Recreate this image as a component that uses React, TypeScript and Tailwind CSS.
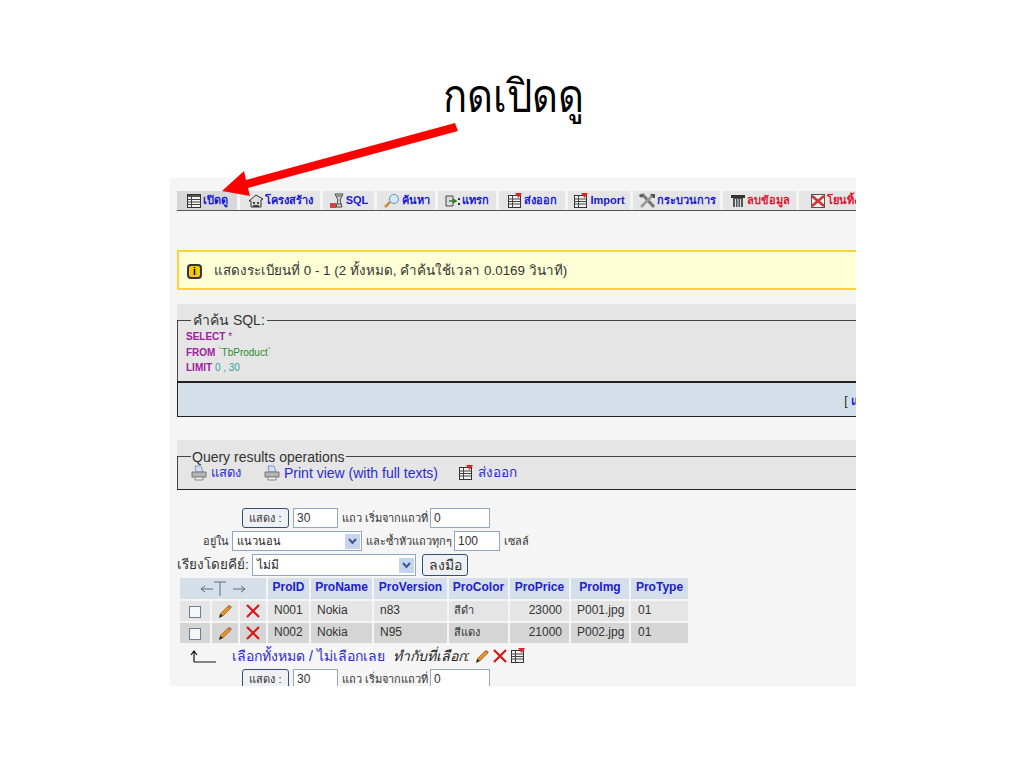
import React from "react";

const F = "font-['Liberation_Sans','Noto_Sans','DejaVu_Sans',sans-serif]";

function TableIcon() {
  return (
    <svg width="16" height="16" viewBox="0 0 16 16" className="shrink-0">
      <rect x="1.5" y="1.5" width="13" height="13" fill="#f2f2f2" stroke="#333" />
      <path d="M2 2h12v2H2z" fill="#555" />
      <path d="M1.500 6.500h13M1.500 9h13M1.500 11.500h13M5.500 2v12" stroke="#444" />
    </svg>
  );
}
function ExportIcon() {
  return (
    <svg width="16" height="16" viewBox="0 0 16 16" className="shrink-0">
      <rect x="1.5" y="2.5" width="12" height="12" fill="#f2f2f2" stroke="#333" />
      <path d="M1.500 6h12M1.500 8.500h12M1.500 11h12M5.500 2.500v12" stroke="#444" />
      <path d="M8 0h7l-3.500 5z" fill="#d22" />
    </svg>
  );
}
function HouseIcon() {
  return (
    <svg width="16" height="16" viewBox="0 0 16 16" className="shrink-0">
      <path d="M1 8l7-6 7 4-2 1v7H3V8z" fill="#ddd" stroke="#333" />
      <path d="M5 9h2v2H5zM9 9h2v2H9zM5 12h6v2H5z" fill="#444" />
    </svg>
  );
}
function SqlIcon() {
  return (
    <svg width="16" height="16" viewBox="0 0 16 16" className="shrink-0">
      <path d="M6 1h8l-3 6 2 7H7l2-7z" fill="#ddd" stroke="#444" />
      <path d="M7.500 3h5M8 11h4" stroke="#444" />
      <path d="M1 10h6v5H1z" fill="#c44" />
    </svg>
  );
}
function SearchIcon() {
  return (
    <svg width="18" height="16" viewBox="0 0 18 16" className="shrink-0">
      <path d="M7 9l-5 5" stroke="#c98a3a" strokeWidth="2.5" />
      <circle cx="11" cy="6" r="4.5" fill="#d8e8fb" stroke="#6a8fc0" />
    </svg>
  );
}
function InsertIcon() {
  return (
    <svg width="16" height="16" viewBox="0 0 16 16" className="shrink-0">
      <path d="M1 3h7v10H1z" fill="#ddd" stroke="#444" />
      <path d="M4 8h6M8 6l3 2-3 2" stroke="#2a7a2a" strokeWidth="1.5" fill="none" />
      <path d="M13 5h2v2h-2zM13 10h2v2h-2z" fill="#333" />
    </svg>
  );
}
function ToolsIcon() {
  return (
    <svg width="18" height="16" viewBox="0 0 18 16" className="shrink-0">
      <path d="M4 1L16 14" stroke="#777" strokeWidth="3" />
      <path d="M15 2L3 14" stroke="#999" strokeWidth="2.500" />
      <path d="M12 1h5v4h-2zM2 1l3 1-1 3-3-2z" fill="#555" />
    </svg>
  );
}
function TrashIcon() {
  return (
    <svg width="16" height="16" viewBox="0 0 16 16" className="shrink-0">
      <path d="M1 2h14v3H1z" fill="#333" />
      <path d="M3 5h10v9H3z" fill="#555" />
      <path d="M5.500 6v8M8 6v8M10.500 6v8" stroke="#ddd" />
    </svg>
  );
}
function DropIcon() {
  return (
    <svg width="16" height="16" viewBox="0 0 16 16" className="shrink-0">
      <rect x="1.500" y="1.500" width="13" height="13" fill="#eee" stroke="#555" />
      <path d="M2 3l12 10M14 3L2 13" stroke="#c33" strokeWidth="2.500" />
    </svg>
  );
}
function PrintIcon() {
  return (
    <svg width="16" height="16" viewBox="0 0 16 16" className="shrink-0">
      <path d="M4 1h6l2 6H5z" fill="#cfe0f5" stroke="#7d9cc4" />
      <path d="M1 7h14v5H1z" fill="#b5b5b5" stroke="#777" />
      <path d="M4 12h8v3H4z" fill="#eee" stroke="#888" />
    </svg>
  );
}
function PencilIcon() {
  return (
    <svg width="16" height="16" viewBox="0 0 16 16" className="shrink-0">
      <path d="M3 11l8-8 3 2-8 8z" fill="#e0902c" stroke="#8a5a1c" strokeWidth=".6" />
      <path d="M11 3l1-1 3 2-1 1z" fill="#c9584a" />
      <path d="M3 11l3 2-4 2z" fill="#222" />
    </svg>
  );
}
function CrossIcon() {
  return (
    <svg width="14" height="14" viewBox="0 0 14 14" className="shrink-0">
      <path d="M1 1l12 12M13 1L1 13" stroke="#d81818" strokeWidth="2.200" />
    </svg>
  );
}

const tabs: { label: string; icon: React.ReactNode; w: string; red?: boolean; on?: boolean }[] = [
  { label: "เปิดดู", icon: <TableIcon />, w: "w-[60px]", on: true },
  { label: "โครงสร้าง", icon: <HouseIcon />, w: "w-[80px]" },
  { label: "SQL", icon: <SqlIcon />, w: "w-[51px]" },
  { label: "ค้นหา", icon: <SearchIcon />, w: "w-[58px]" },
  { label: "แทรก", icon: <InsertIcon />, w: "w-[58px]" },
  { label: "ส่งออก", icon: <ExportIcon />, w: "w-[66px]" },
  { label: "Import", icon: <ExportIcon />, w: "w-[62px]" },
  { label: "กระบวนการ", icon: <ToolsIcon />, w: "w-[87px]" },
  { label: "ลบข้อมูล", icon: <TrashIcon />, w: "w-[73px]", red: true },
  { label: "โยนทิ้ง", icon: <DropIcon />, w: "w-[70px]", red: true },
];

const inputCls = "h-[20px] border border-[#8fa8c4] bg-white px-[3px] text-[12px] leading-[18px] text-[#333]";
const btnCls = "border border-[#34506e] rounded-[3px] bg-[#eef0f3] text-[#333] flex items-center justify-center";

function Select({ w, h, text, size }: { w: string; h: string; text: string; size: string }) {
  return (
    <div className={`${w} ${h} ${size} border border-[#8fa8c4] bg-white flex items-center justify-between pl-[4px] pr-[1px] text-[#222]`}>
      <span>{text}</span>
      <span className="w-[15px] h-[15px] bg-[#c5d5f0] flex items-center justify-center">
        <svg width="9" height="7" viewBox="0 0 9 7"><path d="M1 1l3.500 4L8 1" stroke="#3a5a8c" strokeWidth="2" fill="none" /></svg>
      </span>
    </div>
  );
}

function PagerRow() {
  return (
    <div className="flex items-center h-[20px] pl-[65px] text-[11px] text-[#333]">
      <div className={`${btnCls} w-[47px] h-[20px] text-[11px]`}>แสดง :</div>
      <div className={`${inputCls} w-[45px] ml-[4px]`}>30</div>
      <span className="ml-[4px] w-[84px] whitespace-nowrap">แถว เริ่มจากแถวที่</span>
      <div className={`${inputCls} w-[60px] ml-[4px] text-[11px]`}>0</div>
    </div>
  );
}

const th = "bg-[#d5dfe9] text-[#2020d0] font-bold text-[12px] text-center align-middle p-0 pb-[3px]";
const rows = [
  { bg: "bg-[#e5e5e5]", id: "N001", ver: "n83", color: "สีดำ", price: "23000", img: "P001.jpg" },
  { bg: "bg-[#d5d5d5]", id: "N002", ver: "N95", color: "สีแดง", price: "21000", img: "P002.jpg" },
];

export default function App() {
  return (
    <div className={`relative w-[1024px] h-[768px] bg-white overflow-hidden ${F}`}>
      <div className="h-[178px] flex justify-center pt-[63px] pl-[2px]">
        <h1 className="text-[40px] leading-[68px] h-[68px] font-light scale-y-[1.14] text-black font-['Liberation_Serif','Noto_Sans',serif]">กดเปิดดู</h1>
      </div>

      <div className="ml-[170px] w-[686px] h-[508px] bg-[#f5f5f5] overflow-hidden pl-[7px]">
        {/* tabs */}
        <div className="mt-[13px] w-[700px] h-[19px] flex gap-[3px] border-b border-[#555] box-content">
          {tabs.map((t) => (
            <div
              key={t.label}
              className={`${t.w} shrink-0 h-[19px] flex items-center justify-center gap-[1px] whitespace-nowrap text-[11px] font-bold ${t.on ? "bg-[#d8d8d8]" : "bg-[#e5e5e5]"} ${t.red ? "text-[#e01030]" : "text-[#1818d8]"}`}
            >
              {t.icon}
              <span>{t.label}</span>
            </div>
          ))}
        </div>

        {/* notice */}
        <div className="mt-[39px] h-[40px] w-[700px] border-y-2 border-l-2 border-[#ffd23c] bg-[#ffffd5] flex items-center pl-[8px] pt-[3px] text-[13.400px] text-[#333]">
          <span className="w-[15px] h-[15px] rounded-[4px] bg-[#f5c518] border-2 border-[#333] flex items-center justify-center text-[10px] font-bold text-black">i</span>
          <span className="ml-[12px] whitespace-nowrap">แสดงระเบียนที่ 0 - 1 (2 ทั้งหมด, คำค้นใช้เวลา 0.0169 วินาที)</span>
        </div>

        {/* SQL */}
        <div className="mt-[14px] w-[700px] h-[79px] bg-[#e5e5e5] border-b-2 border-[#222] relative">
          <div className="absolute left-0 right-0 top-[16px] bottom-0 border-t border-l border-[#444]" />
          <div className="relative pt-[8px]">
            <div className="ml-[14px] flex w-fit bg-[#e5e5e5] px-[2px] h-[16px] items-center text-[14px] text-[#333]">คำค้น SQL:</div>
            <div className="pl-[9px] pt-[1px] text-[10px] leading-[15.500px]">
              <div><b className="text-[#a020a0]">SELECT</b> <span className="text-[#a020a0]">*</span></div>
              <div><b className="text-[#a020a0]">FROM</b> <span className="text-[#2a8a2a]">`TbProduct`</span></div>
              <div><b className="text-[#a020a0]">LIMIT</b> <span className="text-[#30a0a0]">0 , 30</span></div>
            </div>
          </div>
        </div>
        <div className="w-[679px] h-[34px] bg-[#d5dfe9] border-b border-l border-[#222] flex justify-end items-center pt-[2px] text-[12px] text-[#222] whitespace-nowrap overflow-hidden">
          <span className="mr-[-3px]">[ <span className="text-[#1818d8] font-bold">แ</span></span>
        </div>

        {/* Query ops */}
        <div className="mt-[23px] w-[700px] h-[50px] bg-[#e5e5e5] border-b border-[#222] relative">
          <div className="absolute left-0 right-0 top-[16px] bottom-0 border-t border-l border-[#444]" />
          <div className="relative pt-[9px]">
            <div className="ml-[14px] w-fit bg-[#e5e5e5] px-[1px] h-[16px] flex items-center text-[14px] text-[#333]">Query results operations</div>
            <div className="flex items-center h-[16px] pl-[14px] text-[14px] text-[#2a2ad8]">
              <PrintIcon />
              <span className="ml-[4px] text-[13px]">แสดง</span>
              <span className="ml-[23px]"><PrintIcon /></span>
              <span className="ml-[4px]">Print view (with full texts)</span>
              <span className="ml-[20px]"><ExportIcon /></span>
              <span className="ml-[4px] text-[13.500px]">ส่งออก</span>
            </div>
          </div>
        </div>

        {/* form */}
        <div className="mt-[18px]">
          <PagerRow />
        </div>
        <div className="mt-[3px] flex items-center h-[20px] pl-[26px] text-[11px] text-[#333]">
          <span className="w-[29px]">อยู่ใน</span>
          <Select w="w-[130px]" h="h-[20px]" text="แนวนอน" size="text-[11px]" />
          <span className="ml-[4px] w-[88px] whitespace-nowrap">และซ้ำหัวแถวทุกๆ</span>
          <div className={`${inputCls} w-[46px]`}>100</div>
          <span className="ml-[4px]">เซลล์</span>
        </div>
        <div className="mt-[3px] flex items-center h-[22px] text-[13.500px] text-[#333]">
          <span className="w-[75px] whitespace-nowrap">เรียงโดยคีย์:</span>
          <Select w="w-[164px]" h="h-[22px]" text="ไม่มี" size="text-[12px]" />
          <div className={`${btnCls} ml-[6px] w-[46px] h-[22px] text-[14px]`}>ลงมือ</div>
        </div>

        {/* table */}
        <table className="ml-[1px] table-fixed border-separate border-spacing-[2px] w-[511px]">
          <colgroup>
            <col className="w-[30px]" />
            <col className="w-[26px]" />
            <col className="w-[26px]" />
            <col className="w-[41px]" />
            <col className="w-[61px]" />
            <col className="w-[73px]" />
            <col className="w-[59px]" />
            <col className="w-[59px]" />
            <col className="w-[58px]" />
            <col className="w-[57px]" />
          </colgroup>
          <thead>
            <tr className="h-[20px]">
              <th colSpan={3} className="bg-[#d5dfe9] p-0 align-middle">
                <div className="flex justify-center">
                  <svg width="46" height="18" viewBox="0 0 46 18">
                    <path d="M1 9h12M1 9l4-3M1 9l4 3M14 2h12M20 2v14M33 9h12M45 9l-4-3M45 9l-4 3" stroke="#5a6a7a" fill="none" />
                  </svg>
                </div>
              </th>
              {["ProID", "ProName", "ProVersion", "ProColor", "ProPrice", "ProImg", "ProType"].map((h) => (
                <th key={h} className={th}>{h}</th>
              ))}
            </tr>
          </thead>
          <tbody className="text-[12px] text-[#333]">
            {rows.map((r) => (
              <tr key={r.id} className="h-[20px]">
                <td className={`${r.bg} p-0`}>
                  <div className="flex justify-center">
                    <span className="w-[12px] h-[12px] mt-[2px] border border-[#6a7f99] bg-[#f4f6f8]" />
                  </div>
                </td>
                <td className={`${r.bg} p-0`}><div className="flex justify-center"><PencilIcon /></div></td>
                <td className={`${r.bg} p-0`}><div className="flex justify-center"><CrossIcon /></div></td>
                <td className={`${r.bg} p-0 pl-[6px] pb-[2px]`}>{r.id}</td>
                <td className={`${r.bg} p-0 pl-[6px] pb-[2px]`}>Nokia</td>
                <td className={`${r.bg} p-0 pl-[6px] pb-[2px]`}>{r.ver}</td>
                <td className={`${r.bg} p-0 pl-[5px] pb-[2px] text-[11px]`}>{r.color}</td>
                <td className={`${r.bg} p-0 pr-[7px] pb-[2px] text-right`}>{r.price}</td>
                <td className={`${r.bg} p-0 pl-[6px] pb-[2px]`}>{r.img}</td>
                <td className={`${r.bg} p-0 pl-[7px] pb-[2px]`}>01</td>
              </tr>
            ))}
          </tbody>
        </table>

        <div className="flex items-center h-[22px] pl-[13px] text-[14px]">
          <svg width="28" height="14" viewBox="0 0 28 14" className="shrink-0">
            <path d="M4 13V3M1 6l3-4 3 4M4 13h22" stroke="#111" strokeWidth="1.200" fill="none" />
          </svg>
          <span className="ml-[14px] text-[#2a2ad8] whitespace-nowrap">เลือกทั้งหมด / ไม่เลือกเลย</span>
          <i className="ml-[8px] text-[#222] whitespace-nowrap">ทำกับที่เลือก:</i>
          <span className="ml-[4px]"><PencilIcon /></span>
          <span className="ml-[3px]"><CrossIcon /></span>
          <span className="ml-[3px]"><ExportIcon /></span>
        </div>
        <div className="mt-[2px]"><PagerRow /></div>
      </div>

      {/* red arrow over the screenshot */}
      <svg className="absolute left-0 top-0 pointer-events-none" width="1024" height="768" viewBox="0 0 1024 768">
        <path d="M455 123 L458 131 L248 188 L250 196 L222 191 L244 171 L246 180 Z" fill="#ff0000" />
      </svg>
    </div>
  );
}
